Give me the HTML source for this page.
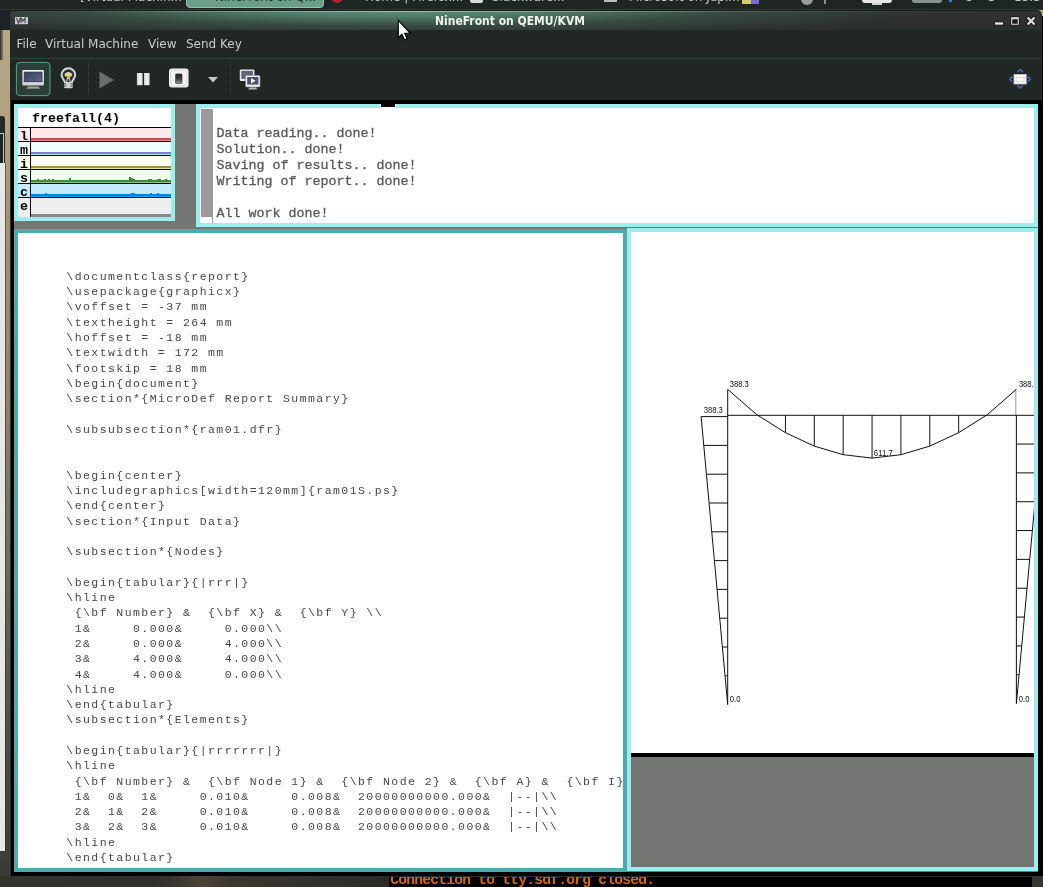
<!DOCTYPE html>
<html lang="en">
<head>
<meta charset="utf-8">
<title>NineFront on QEMU/KVM</title>
<style>
*{margin:0;padding:0;box-sizing:border-box}
html,body{width:1043px;height:887px;overflow:hidden;background:#000}
body{position:relative;font-family:"DejaVu Sans","Liberation Sans",sans-serif}
.abs{position:absolute}
#screen,#title,#menubar,#taskbar,#botstrip{will-change:transform}
#taskbar{left:0;top:0;width:1043px;height:10px;background:#1f2523;overflow:hidden;border-bottom:1px solid #2f3836}
#taskbar span{position:absolute;top:-9.8px;font-size:12px;line-height:14px;color:#c4c9c6;white-space:nowrap}
#leftstrip{left:0;top:10px;width:10px;height:866px;overflow:hidden;background:linear-gradient(180deg,#b7a786 0,#b3a381 12%,#a39473 25%,#8f8368 45%,#6f6a58 65%,#4e4c43 85%,#3b3b35 100%)}
#botstrip{left:0;top:876px;width:1043px;height:11px;overflow:hidden;background:#000}
#title{left:10px;top:10px;width:1032px;height:20px;border-radius:3px 5px 0 0;overflow:hidden;
 background:radial-gradient(ellipse 540px 31px at 390px -3px,rgba(98,150,127,1) 0,rgba(86,132,112,.9) 30%,rgba(62,94,81,.55) 62%,rgba(44,50,48,0) 100%),linear-gradient(180deg,#2f3231 0,#2b2e2d 100%)}
#title:before{content:"";position:absolute;left:0;top:0;width:100%;height:1px;background:#171b1a}
#title:after{content:"";position:absolute;left:0;top:1px;width:100%;height:1px;background:linear-gradient(90deg,rgba(200,230,218,0) 0,rgba(200,230,218,.1) 10%,rgba(215,240,230,.55) 38%,rgba(200,230,218,.3) 60%,rgba(200,230,218,.05) 85%,rgba(200,230,218,0) 100%)}
#title .t{left:0;width:1000px;top:4px;text-align:center;font-family:"DejaVu Sans Condensed","DejaVu Sans",sans-serif;font-weight:bold;font-size:12px;line-height:14px;color:#eef1ef;padding-left:0px}
#menubar{left:10px;top:30px;width:1032px;height:29px;background:#212725;border-bottom:1px solid #2f4239}
#menubar span{position:absolute;top:7px;font-size:12px;line-height:15px;color:#c9cecb;white-space:nowrap}
#toolbar{left:10px;top:59px;width:1032px;height:41px;background:#212725}
#vmblack{left:10px;top:100px;width:1032px;border-left:1px solid #2b2f2d;height:776px;background:#000}
#screen{left:14px;top:104px;width:1024px;height:768px;background:#747673;overflow:hidden}
.win{position:absolute;border:4px solid #9beeee;background:#fff;overflow:hidden}
.win>.in{position:absolute;left:0;top:0;right:0;bottom:0;overflow:hidden}
.vga{font-family:"Liberation Mono","DejaVu Sans Mono",monospace;font-size:13.333px;line-height:16px;white-space:pre}
.b{font-weight:bold}
#ltext{left:48.3px;top:35.8px;font-family:"Liberation Mono",monospace;font-size:11.5px;letter-spacing:1.434px;line-height:15.29px;white-space:pre;color:#484848}
</style>
</head>
<body>
<div id="taskbar" class="abs">
<span style="left:80px">[Virtual Machin...</span>
<div class="abs" style="left:186px;top:-4px;width:138px;height:12px;background:#6a9e88;border:1px solid #8fc4ab;border-radius:4px"></div>
<span style="left:215px;color:#1d2a25">NineFront on Q...</span>
<div class="abs" style="left:331px;top:-9px;width:12px;height:12px;border-radius:6px;background:#b01f3c"></div>
<span style="left:365px">Home | Firefox...</span>
<div class="abs" style="left:470px;top:-6px;width:13px;height:9px;border-radius:2px;background:#d6d8d7"></div>
<span style="left:492px">Slackware...</span>
<div class="abs" style="left:604px;top:-6px;width:13px;height:8px;background:#b9bcbb"></div>
<span style="left:629px">Microsoft on Jupi...</span>
<div class="abs" style="left:742px;top:-4px;width:9px;height:8px;background:#d8cf6a"></div>
<div class="abs" style="left:751px;top:-4px;width:8px;height:8px;background:#7a66d8"></div>
<div class="abs" style="left:801px;top:-8px;width:12px;height:13px;border-radius:6px;background:#9a9d9b"></div>
<div class="abs" style="left:824px;top:0;width:2px;height:4px;background:#8a8d8b"></div>
<div class="abs" style="left:862px;top:0;width:30px;height:3px;background:#e6e8e7;border-radius:0 0 6px 6px"></div>
<div class="abs" style="left:872px;top:3px;width:10px;height:2px;background:#cfd2d0"></div>
<div class="abs" style="left:912px;top:0;width:30px;height:3px;background:#8c908e;border-radius:0 0 6px 6px"></div>
<div class="abs" style="left:949px;top:0;width:3px;height:2px;background:#3f78d8"></div>
<span style="left:965px">8 &#176; C</span>
<span style="left:1014px">15:34</span>
</div>
<div id="leftstrip" class="abs">
<div class="abs" style="left:0;top:0;width:10px;height:20px;background:#1c2227"></div>
<div class="abs" style="left:0;top:20px;width:3px;height:30px;background:linear-gradient(90deg,#2c2e2c,#8a7f66)"></div>
<div class="abs" style="left:0;top:106px;width:4.5px;height:50px;background:#25292b;border-radius:0 3px 0 0"></div>
<div class="abs" style="left:0;top:123px;width:4px;height:30px;background:#1e2422;border-top:1px solid #bfc6c3;border-right:1px solid #bfc6c3"></div>
<div class="abs" style="left:0;top:153px;width:4.5px;height:688px;background:#e7e7e7"></div>
<div class="abs" style="left:4.5px;top:153px;width:1px;height:688px;background:rgba(40,40,36,.55)"></div>
</div>
<div class="abs" style="left:1034px;top:10px;width:9px;height:6px;background:#b9a988"></div>
<div id="title" class="abs"><div class="t abs">NineFront on QEMU/KVM</div></div>
<div id="menubar" class="abs"><span style="left:6.5px">File</span><span style="left:35px">Virtual Machine</span><span style="left:138px">View</span><span style="left:176px">Send Key</span></div>
<div id="toolbar" class="abs"></div>
<div id="vmblack" class="abs"></div>
<div id="screen" class="abs">
<div class="win" id="wstats" style="left:0;top:0;width:161px;height:117px"><div class="in">
<div class="abs vga b" style="left:14px;top:2.5px;color:#000">freefall(4)</div>
<div class="abs" style="left:0;top:19px;width:153px;height:1px;background:#000"></div>
<div class="abs" style="left:0;top:20px;width:153px;height:13px;background:#ffe8ea"></div>
<div class="abs" style="left:13px;top:30px;width:140px;height:2px;background:#b85353"></div>
<div class="abs" style="left:13px;top:32px;width:140px;height:1px;background:#f08a8a"></div>
<div class="abs" style="left:0;top:33px;width:153px;height:1px;background:#000"></div>
<div class="abs vga b" style="left:2px;top:21px;color:#000">l</div>
<div class="abs" style="left:0;top:34px;width:153px;height:13px;background:#eeffff"></div>
<div class="abs" style="left:13px;top:44px;width:140px;height:2px;background:#8480c8"></div>
<div class="abs" style="left:13px;top:46px;width:140px;height:1px;background:#9beeee"></div>
<div class="abs" style="left:0;top:47px;width:153px;height:1px;background:#000"></div>
<div class="abs vga b" style="left:2px;top:35px;color:#000">m</div>
<div class="abs" style="left:0;top:48px;width:153px;height:13px;background:#ffffee"></div>
<div class="abs" style="left:13px;top:58px;width:140px;height:2px;background:#9a9448"></div>
<div class="abs" style="left:13px;top:60px;width:140px;height:1px;background:#e6e69a"></div>
<div class="abs" style="left:0;top:61px;width:153px;height:1px;background:#000"></div>
<div class="abs vga b" style="left:2px;top:49px;color:#000">i</div>
<div class="abs" style="left:0;top:62px;width:153px;height:13px;background:#eeffea"></div>
<div class="abs" style="left:13px;top:72px;width:140px;height:2px;background:#3f8a3f"></div>
<div class="abs" style="left:13px;top:74px;width:140px;height:1px;background:#84c884"></div>
<div class="abs" style="left:0;top:75px;width:153px;height:1px;background:#000"></div>
<div class="abs vga b" style="left:2px;top:63px;color:#000">s</div>
<div class="abs" style="left:0;top:76px;width:153px;height:13px;background:#c4ebfd"></div>
<div class="abs" style="left:13px;top:86px;width:140px;height:2px;background:#0086cc"></div>
<div class="abs" style="left:13px;top:88px;width:140px;height:1px;background:#00a6f7"></div>
<div class="abs" style="left:0;top:89px;width:153px;height:1px;background:#000"></div>
<div class="abs vga b" style="left:2px;top:77px;color:#000">c</div>
<div class="abs" style="left:0;top:90px;width:153px;height:19px;background:#eeeeee"></div>
<div class="abs" style="left:13px;top:106px;width:140px;height:3px;background:#8a8888"></div>
<div class="abs vga b" style="left:2px;top:91px;color:#000">e</div>
<div class="abs" style="left:12px;top:19px;width:1px;height:90px;background:#000"></div>
<div class="abs" style="left:19px;top:71px;width:2px;height:1px;background:#3f8a3f"></div>
<div class="abs" style="left:26px;top:71px;width:2px;height:1px;background:#3f8a3f"></div>
<div class="abs" style="left:30px;top:71px;width:2px;height:1px;background:#3f8a3f"></div>
<div class="abs" style="left:34px;top:71px;width:2px;height:1px;background:#3f8a3f"></div>
<div class="abs" style="left:51px;top:70px;width:2px;height:2px;background:#3f8a3f"></div>
<div class="abs" style="left:111px;top:69px;width:2px;height:3px;background:#3f8a3f"></div>
<div class="abs" style="left:113px;top:70px;width:2px;height:2px;background:#3f8a3f"></div>
<div class="abs" style="left:115px;top:71px;width:2px;height:1px;background:#3f8a3f"></div>
<div class="abs" style="left:130px;top:71px;width:2px;height:1px;background:#3f8a3f"></div>
<div class="abs" style="left:132px;top:71px;width:2px;height:1px;background:#3f8a3f"></div>
<div class="abs" style="left:139px;top:71px;width:2px;height:1px;background:#3f8a3f"></div>
<div class="abs" style="left:141px;top:71px;width:2px;height:1px;background:#3f8a3f"></div>
<div class="abs" style="left:147px;top:71px;width:2px;height:1px;background:#3f8a3f"></div>
<div class="abs" style="left:27px;top:85px;width:2px;height:1px;background:#0086cc"></div>
<div class="abs" style="left:113px;top:85px;width:2px;height:1px;background:#0086cc"></div>
<div class="abs" style="left:115px;top:85px;width:2px;height:1px;background:#0086cc"></div>
<div class="abs" style="left:132px;top:85px;width:2px;height:1px;background:#0086cc"></div>
<div class="abs" style="left:139px;top:85px;width:2px;height:1px;background:#0086cc"></div>
</div></div>
<div class="win" id="wterm" style="left:182px;top:0;width:842px;height:123px"><div class="in">
<div class="abs" style="left:1px;top:1px;width:11.5px;height:107.5px;background:#9b999a"></div>
<div class="abs" style="left:12px;top:108px;width:1px;height:8px;background:#9b999a"></div>
<pre class="abs vga" style="left:16.6px;top:1.7px;color:#585858;-webkit-text-stroke:0.3px #585858">

Data reading.. done!
Solution.. done!
Saving of results.. done!
Writing of report.. done!

All work done!</pre>
</div></div>
<div class="abs" style="left:366px;top:0;width:16px;height:4px;background:#fff"></div>
<div class="abs" style="left:367px;top:0;width:14px;height:3px;background:#000"></div>
<div class="win" id="wleft" style="left:0;top:125px;width:613px;height:643px;border-color:#52a9ab"><div class="in">
<pre id="ltext" class="abs">\documentclass{report}
\usepackage{graphicx}
\voffset = -37 mm
\textheight = 264 mm
\hoffset = -18 mm
\textwidth = 172 mm
\footskip = 18 mm
\begin{document}
\section*{MicroDef Report Summary}

\subsubsection*{ram01.dfr}


\begin{center}
\includegraphics[width=120mm]{ram01S.ps}
\end{center}
\section*{Input Data}

\subsection*{Nodes}

\begin{tabular}{|rrr|}
\hline
 {\bf Number} &amp;  {\bf X} &amp;  {\bf Y} \\
 1&amp;     0.000&amp;     0.000\\
 2&amp;     0.000&amp;     4.000\\
 3&amp;     4.000&amp;     4.000\\
 4&amp;     4.000&amp;     0.000\\
\hline
\end{tabular}
\subsection*{Elements}

\begin{tabular}{|rrrrrrr|}
\hline
 {\bf Number} &amp;  {\bf Node 1} &amp;  {\bf Node 2} &amp;  {\bf A} &amp;  {\bf I}
 1&amp;  0&amp;  1&amp;     0.010&amp;     0.008&amp;  20000000000.000&amp;  |--|\\
 2&amp;  1&amp;  2&amp;     0.010&amp;     0.008&amp;  20000000000.000&amp;  |--|\\
 3&amp;  2&amp;  3&amp;     0.010&amp;     0.008&amp;  20000000000.000&amp;  |--|\\
\hline
\end{tabular}</pre>
</div></div>
<div class="win" id="wright" style="left:613px;top:124px;width:411px;height:643px;background:#747673"><div class="in">
<div class="abs" style="left:0;top:0;width:403px;height:521px;background:#fff"></div>
<div class="abs" style="left:0;top:521px;width:403px;height:3.5px;background:#000"></div>
<svg class="abs" style="left:0;top:0" width="403" height="521" viewBox="0 0 403 521"><g stroke="#111" stroke-width="1"><line x1="96.70" y1="157.40" x2="96.70" y2="472.60"/><line x1="385.40" y1="183.30" x2="385.40" y2="471.60"/><line x1="384.80" y1="157.20" x2="384.80" y2="183.30" stroke="#999"/><line x1="96.70" y1="183.30" x2="409.00" y2="183.30"/><line x1="154.44" y1="183.30" x2="154.44" y2="200.70"/><line x1="183.31" y1="183.30" x2="183.31" y2="214.10"/><line x1="212.18" y1="183.30" x2="212.18" y2="222.70"/><line x1="241.05" y1="183.30" x2="241.05" y2="226.10"/><line x1="269.92" y1="183.30" x2="269.92" y2="222.70"/><line x1="298.79" y1="183.30" x2="298.79" y2="214.10"/><line x1="327.66" y1="183.30" x2="327.66" y2="200.70"/><polyline fill="none" points="96.70,157.30 125.57,182.50 154.44,200.70 183.31,214.10 212.18,222.70 241.05,226.10 269.92,222.70 298.79,214.10 327.66,200.70 356.53,182.50 385.40,157.30"/><line x1="70.10" y1="184.60" x2="96.70" y2="472.60"/><line x1="70.10" y1="184.60" x2="96.70" y2="184.60"/><line x1="412.00" y1="183.20" x2="385.40" y2="471.60"/><line x1="72.76" y1="213.40" x2="96.70" y2="213.40"/><line x1="385.40" y1="212.04" x2="409.34" y2="212.04"/><line x1="75.42" y1="242.20" x2="96.70" y2="242.20"/><line x1="385.40" y1="240.88" x2="406.68" y2="240.88"/><line x1="78.08" y1="271.00" x2="96.70" y2="271.00"/><line x1="385.40" y1="269.72" x2="404.02" y2="269.72"/><line x1="80.74" y1="299.80" x2="96.70" y2="299.80"/><line x1="385.40" y1="298.56" x2="401.36" y2="298.56"/><line x1="83.40" y1="328.60" x2="96.70" y2="328.60"/><line x1="385.40" y1="327.40" x2="398.70" y2="327.40"/><line x1="86.06" y1="357.40" x2="96.70" y2="357.40"/><line x1="385.40" y1="356.24" x2="396.04" y2="356.24"/><line x1="88.72" y1="386.20" x2="96.70" y2="386.20"/><line x1="385.40" y1="385.08" x2="393.38" y2="385.08"/><line x1="91.38" y1="415.00" x2="96.70" y2="415.00"/><line x1="385.40" y1="413.92" x2="390.72" y2="413.92"/><line x1="94.04" y1="443.80" x2="96.70" y2="443.80"/><line x1="385.40" y1="442.76" x2="388.06" y2="442.76"/></g><g font-family="Liberation Sans, sans-serif" font-size="8.3" fill="#111"><text x="98.8" y="154.7" textLength="19.0" lengthAdjust="spacingAndGlyphs">388.3</text><text x="72.8" y="181.4" textLength="19.0" lengthAdjust="spacingAndGlyphs">388.3</text><text x="387.9" y="154.7" textLength="19.0" lengthAdjust="spacingAndGlyphs">388.3</text><text x="242.8" y="223.8" textLength="19.0" lengthAdjust="spacingAndGlyphs">611.7</text><text x="98.8" y="470.0" textLength="10.6" lengthAdjust="spacingAndGlyphs">0.0</text><text x="387.8" y="470.0" textLength="10.6" lengthAdjust="spacingAndGlyphs">0.0</text></g></svg>
</div></div>
</div>
<svg id="chrome" class="abs" style="left:0;top:0" width="1043" height="104" viewBox="0 0 1043 104">
<defs>
<linearGradient id="gmon" x1="0" y1="0" x2="0" y2="1"><stop offset="0" stop-color="#f6f6f6"/><stop offset="1" stop-color="#d2d2d2"/></linearGradient>
<linearGradient id="gscr" x1="0" y1="0" x2="1" y2="1"><stop offset="0" stop-color="#38425c"/><stop offset=".5" stop-color="#4a5570"/><stop offset="1" stop-color="#5f6a82"/></linearGradient>
<linearGradient id="gsw" x1="0" y1="0" x2="0" y2="1"><stop offset="0" stop-color="#2a2a2a"/><stop offset=".5" stop-color="#3a3a3a"/><stop offset="1" stop-color="#9a9a9a"/></linearGradient>
<linearGradient id="gpau" x1="0" y1="0" x2="1" y2="0"><stop offset="0" stop-color="#cfcfcf"/><stop offset=".5" stop-color="#f4f4f4"/><stop offset="1" stop-color="#d8d8d8"/></linearGradient>
</defs>
<!-- title icon -->
<rect x="15" y="17" width="13" height="7.2" fill="#c9c9cf"/>
<path d="M16.5 18 l2 5 2-5 M21 23 v-5 l2 3 2-3 v5" fill="none" stroke="#4a4450" stroke-width="1.1"/>
<!-- window buttons -->
<rect x="994.3" y="21.6" width="9.4" height="3.8" fill="#111"/><rect x="995" y="22.3" width="8" height="2.4" fill="#e4e6e5"/>
<rect x="1010.4" y="16.4" width="9.2" height="9.2" rx="0.8" fill="#151515"/><path fill-rule="evenodd" d="M1011.2 17.2 h7.6 v7.6 h-7.6z M1012.3 19.2 v4.5 h5.4 v-4.5z" fill="#e6e6e6"/>
<path d="M1028.4 18.3 L1033.8 23.7 M1033.8 18.3 L1028.4 23.7" stroke="#151515" stroke-width="3.8" fill="none" stroke-linecap="square"/><path d="M1028.4 18.3 L1033.8 23.7 M1033.8 18.3 L1028.4 23.7" stroke="#e2e2e2" stroke-width="2.2" fill="none" stroke-linecap="square"/>
<!-- toolbar: console button -->
<rect x="16.4" y="62.4" width="33.6" height="33.2" rx="3.5" fill="#2b3e38" stroke="#62ad93" stroke-width="0.9"/>
<rect x="22.4" y="70" width="21.5" height="15.5" rx="1" fill="url(#gmon)"/>
<rect x="24.2" y="72.1" width="17.8" height="9.6" fill="url(#gscr)" stroke="#232d55" stroke-width="0.8"/>
<path d="M28 86.4 h10.5 l1.6 2.4 h-13.7z" fill="#9fa3a1"/>
<rect x="26.4" y="88" width="13.7" height="1" fill="#7d817f"/>
<!-- bulb -->
<path d="M65 83 C65 80.2 61.6 78.8 61.6 75 A6.8 6.8 0 1 1 75.2 75 C75.2 78.8 71.8 80.2 71.8 83" fill="#2a302e" stroke="#d6d6d6" stroke-width="2"/>
<path d="M66.6 82 L67.6 77.2 L68.4 79 L69.2 77.2 L70.2 82" fill="none" stroke="#e8e8e8" stroke-width="0.9"/>
<ellipse cx="68.4" cy="74.9" rx="3.8" ry="1.9" fill="#e6d85a"/>
<path d="M64.8 73.6 Q68.4 70.4 72 73.6 Q68.4 75 64.8 73.6z" fill="#d9d9d9"/>
<rect x="64.1" y="82" width="8.7" height="6.3" rx="1.2" fill="#d2d2d2"/>
<path d="M64.1 83.9 h2.2 M64.1 86 h2.2 M70.6 83.9 h2.2 M70.6 86 h2.2" stroke="#3e4340" stroke-width="0.9"/>
<!-- separators -->
<path d="M88.5 62 V96 M230.5 62 V96" stroke="#3b4743" stroke-width="1" stroke-dasharray="1 1"/>
<!-- play -->
<path d="M99.6 71.8 L114 80 L99.6 88.2z" fill="#6b6f6c" stroke="#4e5350" stroke-width="0.8"/>
<!-- pause -->
<rect x="136.9" y="73" width="5.7" height="12.2" fill="url(#gpau)"/>
<rect x="144" y="73" width="5.6" height="12.2" fill="url(#gpau)"/>
<!-- power -->
<rect x="169" y="68.6" width="19.6" height="19" rx="3" fill="#f3f3f3"/>
<rect x="170.6" y="70.2" width="16.4" height="15.8" rx="2" fill="none" stroke="#d9d9d9" stroke-width="1"/>
<rect x="175.6" y="73.9" width="6.4" height="9.6" rx="0.8" fill="url(#gsw)" stroke="#222" stroke-width="0.6"/>
<!-- dropdown -->
<path d="M208 77 h10 l-5 5.4z" fill="#c3c7c5"/>
<!-- monitors -->
<rect x="239.8" y="69.4" width="14.6" height="11.6" rx="1" fill="#e9e9e9"/>
<rect x="241.3" y="70.9" width="11.6" height="8" fill="#5d667a"/>
<rect x="245.6" y="75.4" width="14.4" height="11.6" rx="1" fill="#f1f1f1" stroke="#8a8e8c" stroke-width="0.6"/>
<rect x="247.2" y="77" width="11.2" height="7.6" fill="#47536c"/>
<path d="M251 78.2 l4.6 2.6 -4.6 2.6z" fill="#fff"/>
<path d="M249.5 87.6 h6.6 l1.4 2 h-9.4z" fill="#b5b8b6"/>
<!-- fullscreen -->
<rect x="1014" y="74.4" width="12.2" height="9.6" fill="#f5f5f5" stroke="#c9c9c9" stroke-width="0.8"/>
<rect x="1016.2" y="77.4" width="7.8" height="4.4" fill="#fff" stroke="#cfcfcf" stroke-width="0.7"/>
<path d="M1017.8 71.6 l2.3-2.1 2.3 2.1 M1017.8 85.9 l2.3 2.1 2.3-2.1 M1012 76.9 l-2.1 2.3 2.1 2.3 M1028.1 76.9 l2.1 2.3 -2.1 2.3" fill="none" stroke="#3a69c2" stroke-width="1.6" stroke-linecap="round"/>
<!-- mouse cursor -->
<path d="M398.3 20.3 V37.6 L401.9 34.2 L404.6 39.8 L407.2 38.7 L404.6 33.2 H410z" fill="#fff" stroke="#000" stroke-width="1.1" stroke-linejoin="miter"/>
</svg>
<div id="botstrip" class="abs">
<div class="abs" style="left:0;top:0;width:390px;height:11px;background:linear-gradient(90deg,#34342f 0,#2f2e2a 40%,#4a4438 52%,#3a372f 60%,#2b2a27 100%)"></div>
<div class="abs" style="left:389px;top:0;width:643px;height:11px;background:#000;border-top:1px solid #2a2a2a"></div>
<div class="abs" style="left:1032px;top:0;width:11px;height:11px;background:#37352e"></div>
<div class="abs" style="left:389px;top:0.6px;width:300px;height:10.4px;overflow:hidden"><div class="abs" style="left:1.3px;top:-4.3px;font-family:'Liberation Mono',monospace;font-weight:bold;font-size:14.6px;letter-spacing:-0.762px;line-height:16px;color:#d26a05;white-space:pre">Connection to tty.sdf.org closed.</div></div>
</div>
</body>
</html>
